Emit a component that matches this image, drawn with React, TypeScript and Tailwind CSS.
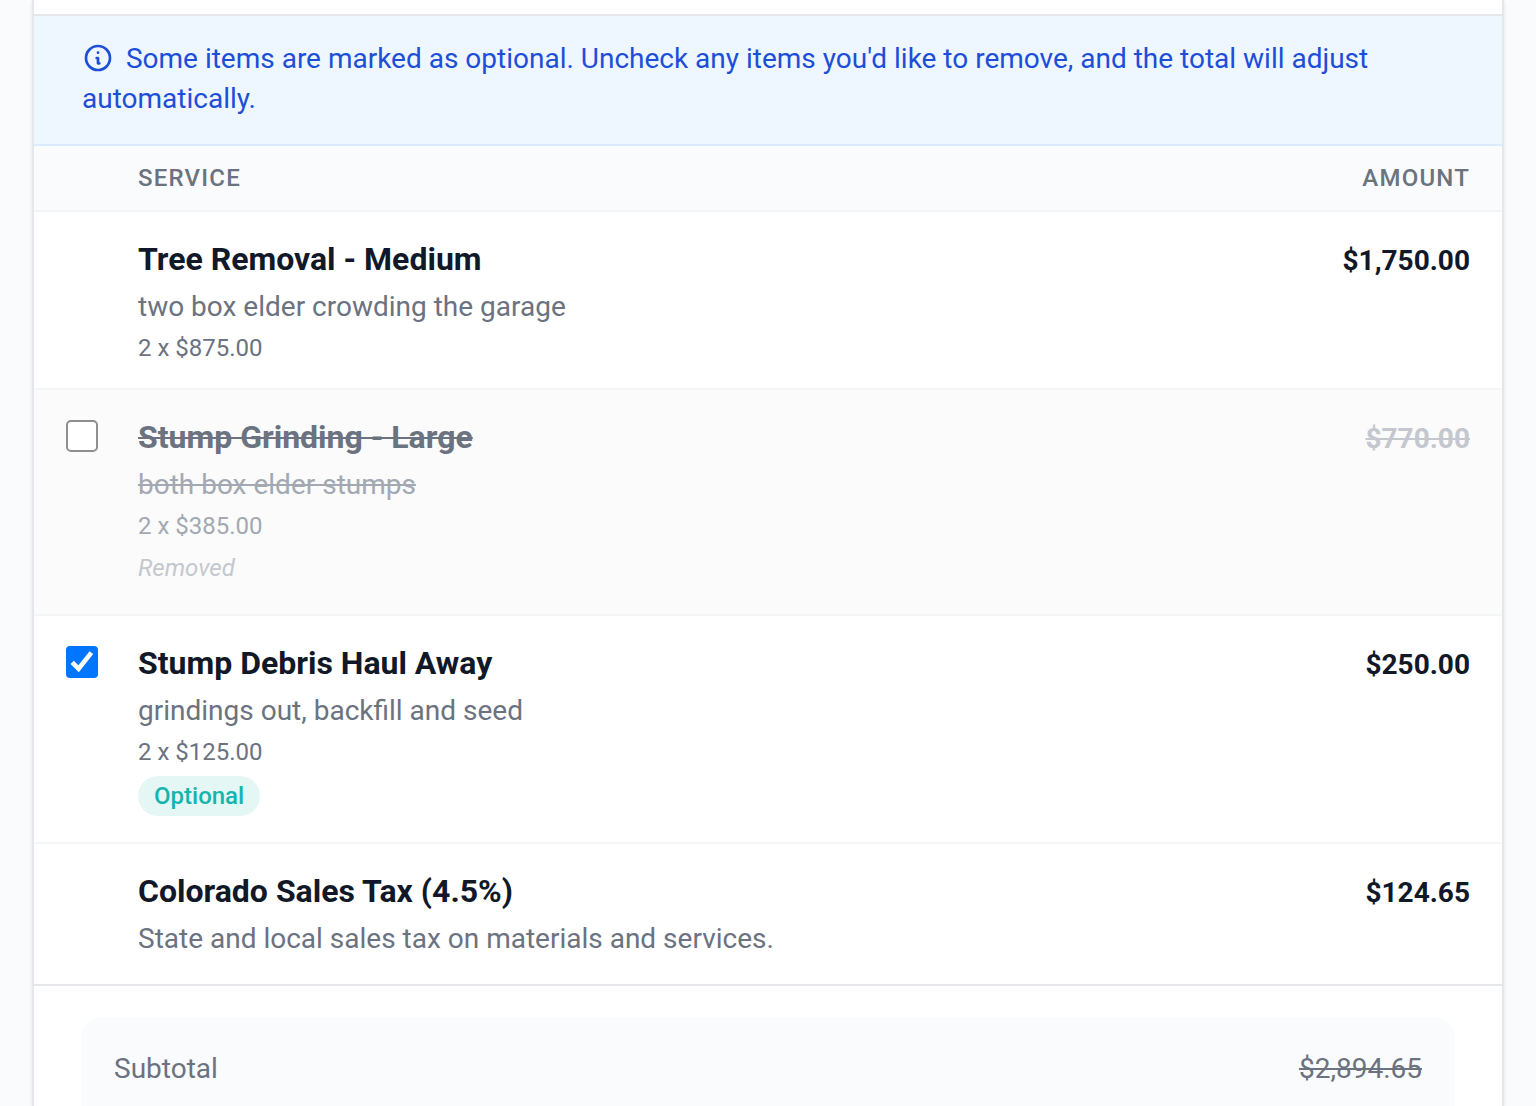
import { useState } from 'react';
import clsx from 'clsx';

interface LineItem {
  id: string;
  name: string;
  description: string;
  amount: string;
  quantity?: string;
  optional?: boolean;
}

const ITEMS: LineItem[] = [
  { id: 'tree', name: 'Tree Removal - Medium', description: 'two box elder crowding the garage', quantity: '2 x $875.00', amount: '$1,750.00' },
  { id: 'stump', name: 'Stump Grinding - Large', description: 'both box elder stumps', quantity: '2 x $385.00', amount: '$770.00', optional: true },
  { id: 'debris', name: 'Stump Debris Haul Away', description: 'grindings out, backfill and seed', quantity: '2 x $125.00', amount: '$250.00', optional: true },
  { id: 'tax', name: 'Colorado Sales Tax (4.5%)', description: 'State and local sales tax on materials and services.', amount: '$124.65' },
];

function InfoIcon() {
  return (
    <svg className="mr-[5px] inline-block size-8 align-[-6px]" viewBox="0 0 24 24" fill="none" stroke="currentColor" strokeWidth={2} strokeLinecap="round" strokeLinejoin="round" aria-hidden="true">
      <path d="M13 16h-1v-4h-1m1-4h.01M21 12a9 9 0 11-18 0 9 9 0 0118 0z" />
    </svg>
  );
}

interface RowProps { item: LineItem; included: boolean; last: boolean; onToggle: () => void }

function ItemRow({ item, included, last, onToggle }: RowProps) {
  const removed = !included;
  return (
    <tr className={clsx('border-b-2 align-top', last ? 'border-[#e5e7eb]' : 'border-[#f5f6f7]', removed && 'bg-[#fbfbfb]')}>
      <td className="w-[104px] pt-[30px] pl-8">
        {item.optional && (
          <div className="relative size-8">
            <input
              id={item.id}
              type="checkbox"
              checked={included}
              onChange={onToggle}
              className="peer block size-8 appearance-none rounded-[5px] border-2 border-[#8f8f8f] bg-white checked:rounded-[4px] checked:border-[#0075ff] checked:bg-[#0075ff]"
            />
            <svg className="pointer-events-none absolute inset-0 hidden size-8 peer-checked:block" viewBox="0 0 32 32" fill="none" stroke="#fff" strokeWidth={4.6} aria-hidden="true">
              <path d="M6.2 16.4 12.6 22.8 25.4 6.6" />
            </svg>
          </div>
        )}
      </td>
      <td className="pt-6 pb-6">
        <label htmlFor={item.optional ? item.id : undefined} className={clsx('block text-[32px] leading-[46px] font-bold', removed ? 'text-[#6b7280] line-through decoration-2' : 'text-[#111827]')}>
          {item.name}
        </label>
        <p className={clsx('mt-1 text-[28px] leading-[42px]', removed ? 'text-[#a3a9b2] line-through decoration-2' : 'text-[#6b7280]')}>{item.description}</p>
        {item.quantity && <p className={clsx('mt-1 text-2xl', removed ? 'text-[#a3a9b2]' : 'text-[#6b7280]')}>{item.quantity}</p>}
        {item.optional && removed && <p className="mt-2 pb-1 text-2xl leading-9 text-[#c4c8ce] italic">Removed</p>}
        {item.optional && included && (
          <div className="mt-2 flex pb-0.5">
            <span className="rounded-full bg-[#e5f7f5] px-4 py-1 text-2xl font-medium text-[#14b5ad]">Optional</span>
          </div>
        )}
      </td>
      <td className={clsx('pt-7 pr-8 text-right text-[28px] leading-[42px] font-bold', removed ? 'text-[#c4c8ce] line-through decoration-2' : 'text-[#111827]')}>
        {item.amount}
      </td>
    </tr>
  );
}

export default function App() {
  const [included, setIncluded] = useState<Record<string, boolean>>({ debris: true });

  return (
    <div className="flex min-h-screen flex-col bg-[#fafbfd] px-8 font-[Roboto,sans-serif]">
      <main className="flex flex-1 flex-col border-x-2 border-[#e5e7eb] bg-white shadow-sm">
        <div className="h-4 border-b-2 border-[#e5e7eb]" />

        <p className="border-b-2 border-[#dbeafe] bg-[#eef6ff] px-12 pt-[23px] pb-[25px] text-[28px] leading-10 text-[#1d4ed8]">
          <InfoIcon /> Some items are marked as optional. Uncheck any items you'd like to remove, and the total will adjust automatically.
        </p>

        <table className="w-full border-collapse">
          <thead>
            <tr className="border-b-2 border-[#f3f4f6] bg-[#fafbfc] text-2xl tracking-wider text-[#6b7280] uppercase">
              <th className="w-[104px]" />
              <th className="py-4 text-left font-medium">Service</th>
              <th className="py-4 pr-8 text-right font-medium">Amount</th>
            </tr>
          </thead>
          <tbody>
            {ITEMS.map((item, i) => (
              <ItemRow
                key={item.id}
                item={item}
                included={!item.optional || !!included[item.id]}
                last={i === ITEMS.length - 1}
                onToggle={() => setIncluded((s) => ({ ...s, [item.id]: !s[item.id] }))}
              />
            ))}
          </tbody>
        </table>

        {/* Totals */}
        <div className="flex flex-1 flex-col px-12 pt-8">
          <div className="flex-1 rounded-t-2xl bg-[#fafbfc] px-8 pt-[30px]">
            <div className="flex justify-between text-[28px] leading-[42px] text-[#6b7280]">
              <span>Subtotal</span>
              <span className="line-through decoration-2">$2,894.65</span>
            </div>
          </div>
        </div>
      </main>
    </div>
  );
}
